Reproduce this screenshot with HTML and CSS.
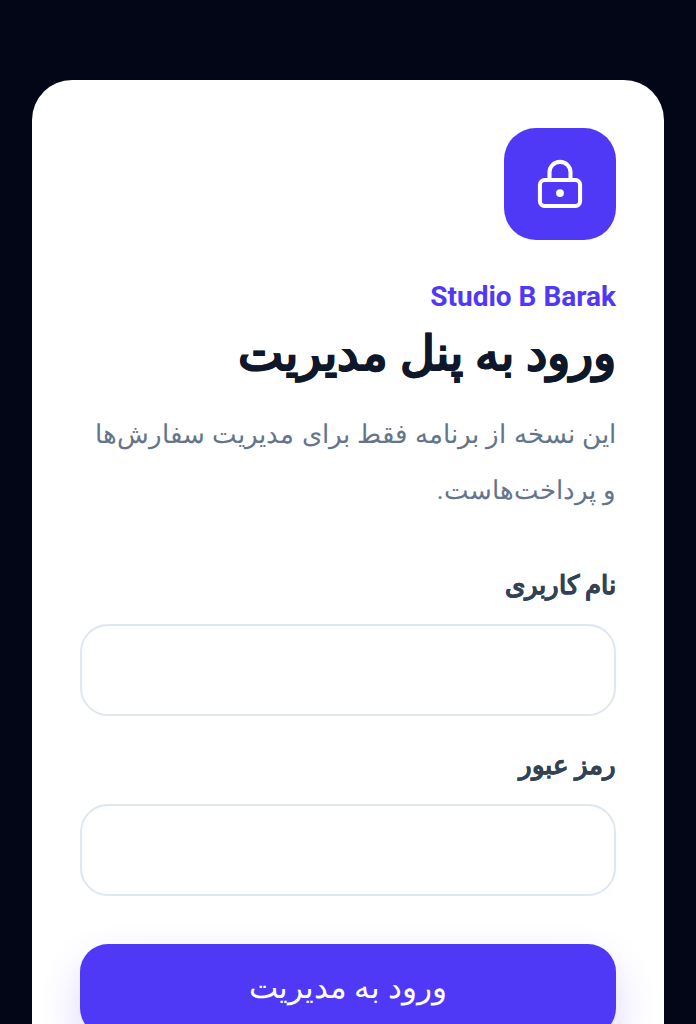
FILE: index.html
```html
<!DOCTYPE html>
<html lang="fa" dir="rtl">
<head>
<meta charset="utf-8">
<title>ورود</title>
<link rel="stylesheet" href="styles.css">
</head>
<body>
<main class="card">
  <div class="logo">
    <svg width="56" height="56" viewBox="0 0 24 24" fill="none" stroke="#fff" stroke-width="1.75" stroke-linecap="round" stroke-linejoin="round">
      <rect x="3.4" y="10.3" width="17.2" height="11.1" rx="2"/>
      <path d="M7.5 10.3V7a4.5 4.5 0 0 1 9 0v3.3"/>
      <circle cx="12" cy="15.9" r="1.7" fill="#fff" stroke="none"/>
    </svg>
  </div>
  <div class="brand">Studio B Barak</div>
  <h1 class="title">ورود به پنل مدیریت</h1>
  <p class="desc">این نسخه از برنامه فقط برای مدیریت سفارش‌ها و پرداخت‌هاست.</p>
  <form class="form">
    <label class="label">نام کاربری</label>
    <input class="input" type="text">
    <label class="label">رمز عبور</label>
    <input class="input" type="password">
    <button class="btn" type="button">ورود به مدیریت</button>
  </form>
</main>
</body>
</html>
```
FILE: styles.css
```css
* { box-sizing: border-box; }
html, body { margin: 0; height: 100%; overflow: hidden; }
body {
  background: #020617;
  padding: 80px 32px 0;
  font-family: Roboto, "Noto Sans", sans-serif;
}
.card {
  background: #fff;
  border-radius: 40px;
  padding: 48px;
  min-height: 1000px;
}
.logo {
  width: 112px; height: 112px;
  background: #4f39f6;
  border-radius: 32px;
  display: flex; align-items: center; justify-content: center;
}
.brand { margin-top: 39px; font-size: 28px; line-height: 36px; font-weight: 700; color: #4f39f6; }
.title { margin: 9px 0 0; font-size: 48px; line-height: 60px; font-weight: 800; color: #0f172a; -webkit-text-stroke: 0.7px #0f172a; }
.desc { margin: 22px 0 0; font-size: 26px; line-height: 56px; color: #64748b; max-width: 528px; word-spacing: 1px; }
.form { margin-top: 50px; display: flex; flex-direction: column; }
.label { font-size: 26px; line-height: 34px; font-weight: 700; color: #334155; margin-bottom: 22px; -webkit-text-stroke: 0.3px #334155; }
.input { height: 92px; border: 2px solid #dfe7f1; border-radius: 28px; background: #fff; margin-bottom: 32px; }
.btn { margin-top: 16px; height: 92px; padding: 0 0 6px; border: 0; border-radius: 28px; background: #4f39f6; color: #fff; font: inherit; font-size: 31px; box-shadow: 0 20px 40px rgba(79,57,246,.2); }
```
